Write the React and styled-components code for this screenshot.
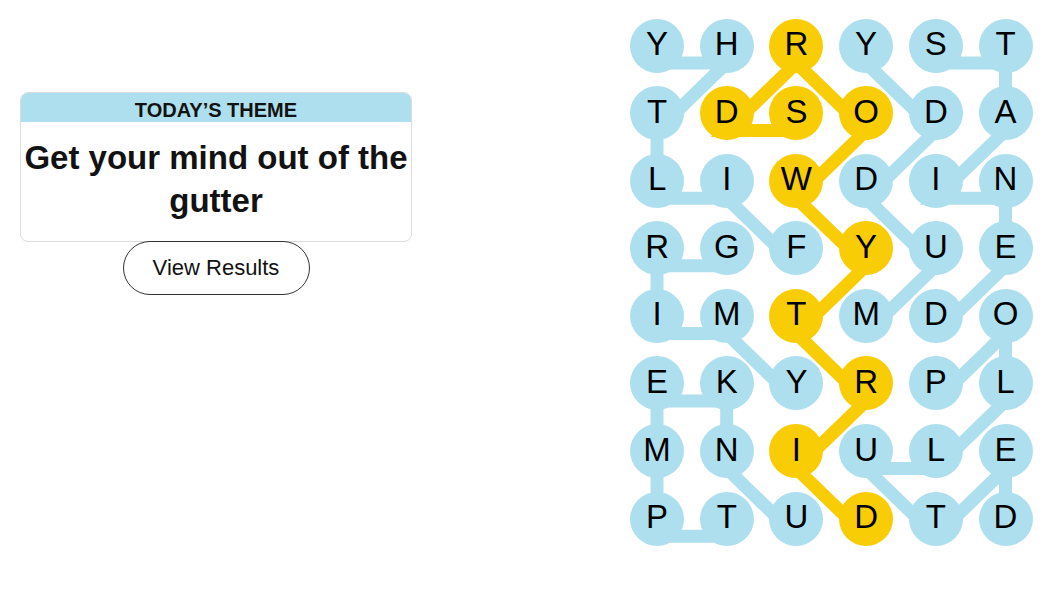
import React from 'react';
import styled, { createGlobalStyle } from 'styled-components';

const GlobalStyle = createGlobalStyle`
  body {
    margin: 0;
    background: #fff;
    font-family: "Liberation Sans", Arial, sans-serif;
    color: #121212;
  }
`;

const BLUE = '#aedfee';
const YELLOW = '#f8cd05';

const CELL = 54;
const PITCH_X = 69.7;
const PITCH_Y = 67.6;
const LINE_SHIFT = 17;

const ROWS = ['YHRYST', 'TDSODA', 'LIWDIN', 'RGFYUE', 'IMTMDO', 'EKYRPL', 'MNIULE', 'PTUDTD'];

const SPANGRAM = [[7, 3], [6, 2], [5, 3], [4, 2], [3, 3], [2, 2], [1, 3], [0, 2], [1, 1], [1, 2]];

const WORDS = [
  [[3, 2], [2, 1], [2, 0], [1, 0], [0, 1], [0, 0]],
  [[4, 3], [3, 4], [2, 3], [1, 4], [0, 3]],
  [[0, 4], [0, 5], [1, 5], [2, 4], [2, 5], [3, 5], [4, 4]],
  [[3, 1], [3, 0], [4, 0], [4, 1], [5, 2]],
  [[7, 2], [6, 1], [5, 1], [5, 0], [6, 0], [7, 0], [7, 1]],
  [[5, 4], [4, 5], [5, 5], [6, 4], [6, 3], [7, 4], [6, 5], [7, 5]],
];

const Page = styled.div`
  display: flex;
  justify-content: space-between;
  align-items: flex-start;
  width: 1052px;
  height: 592px;
  overflow: hidden;
`;

const Side = styled.section`
  width: 392px;
  margin: 92px 0 0 20px;
  display: flex;
  flex-direction: column;
  align-items: center;
`;

const ThemeCard = styled.div`
  width: 100%;
  box-sizing: border-box;
  border: 1px solid #dcdcdc;
  border-radius: 8px;
  overflow: hidden;
  text-align: center;
`;

const ThemeHeader = styled.h2`
  margin: 0;
  height: 29px;
  box-sizing: border-box;
  padding-top: 6px;
  background: ${BLUE};
  font-size: 20px;
  line-height: 23px;
  font-weight: 700;
  color: #121212;
`;

const ThemeTitle = styled.h1`
  margin: 0;
  padding: 14px 2px 19px;
  font-size: 33px;
  line-height: 43px;
  font-weight: 700;
  color: #121212;
`;

const ResultsButton = styled.button`
  margin-top: -1px;
  width: 187px;
  height: 54px;
  border: 1px solid #333;
  border-radius: 27px;
  background: #fff;
  font-family: "Liberation Sans", Arial, sans-serif;
  font-size: 22px;
  color: #121212;
  cursor: pointer;
`;

const Board = styled.div`
  position: relative;
  margin: 18.5px 19.5px 0 0;
  display: grid;
  grid-template-columns: repeat(6, ${CELL}px);
  grid-auto-rows: ${CELL}px;
  column-gap: ${PITCH_X - CELL}px;
  row-gap: ${PITCH_Y - CELL}px;
`;

const Lines = styled.svg`
  position: absolute;
  left: 0;
  top: 0;
  overflow: visible;
  pointer-events: none;
  z-index: 0;
`;

const Letter = styled.div`
  position: relative;
  z-index: 1;
  width: ${CELL}px;
  height: ${CELL}px;
  box-sizing: border-box;
  padding-bottom: 3px;
  border-radius: 50%;
  background: ${({ $gold }) => ($gold ? YELLOW : BLUE)};
  display: flex;
  align-items: center;
  justify-content: center;
  font-size: 33px;
  color: #000;
`;

const toPoints = (word) =>
  word
    .map(([r, c]) => `${CELL / 2 + c * PITCH_X},${CELL / 2 + r * PITCH_Y + LINE_SHIFT}`)
    .join(' ');

const gold = new Set(SPANGRAM.map(([r, c]) => `${r}-${c}`));

const App = () => (
  <Page>
    <GlobalStyle />
    <Side>
      <ThemeCard>
        <ThemeHeader>TODAY’S THEME</ThemeHeader>
        <ThemeTitle>Get your mind out of the gutter</ThemeTitle>
      </ThemeCard>
      <ResultsButton>View Results</ResultsButton>
    </Side>
    <Board>
      <Lines width="403" height="527">
        {WORDS.map((w, i) => (
          <polyline key={i} points={toPoints(w)} fill="none" stroke={BLUE} strokeWidth="13" />
        ))}
        <polyline points={toPoints(SPANGRAM)} fill="none" stroke={YELLOW} strokeWidth="13" />
      </Lines>
      {ROWS.map((row, r) =>
        row.split('').map((ch, c) => (
          <Letter key={`${r}-${c}`} $gold={gold.has(`${r}-${c}`)}>
            {ch}
          </Letter>
        ))
      )}
    </Board>
  </Page>
);

export default App;
